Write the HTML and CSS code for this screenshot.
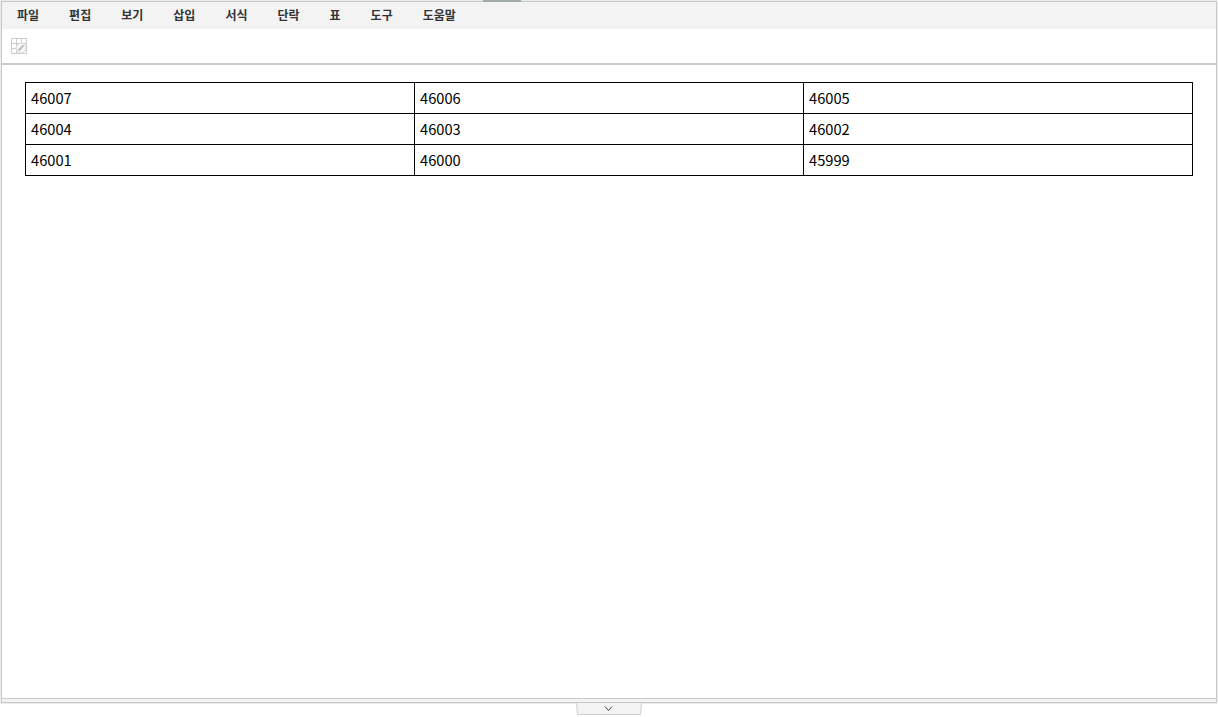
FILE: index.html
```html
<!DOCTYPE html>
<html lang="ko">

<head>
    <meta charset="UTF-8">
    <meta name="viewport" content="width=device-width, initial-scale=1.0">
    <title>Editor</title>
    <link rel="stylesheet" href="styles.css">
</head>

<body>
    <div class="frame">
        <div class="editor">
            <span class="top-tab"></span>
            <div class="menubar">
                <span class="menu-item">파일</span>
                <span class="menu-item">편집</span>
                <span class="menu-item">보기</span>
                <span class="menu-item">삽입</span>
                <span class="menu-item">서식</span>
                <span class="menu-item">단락</span>
                <span class="menu-item">표</span>
                <span class="menu-item">도구</span>
                <span class="menu-item">도움말</span>
            </div>
            <div class="toolbar">
                <svg class="tool-icon" width="16" height="16" viewBox="0 0 16 16" fill="none">
                    <path d="M.5 .5H15.5V15.5H.5ZM.5 5.5H15.5M.5 10.5H15.5M5.5 .5V15.5M10.5 .5V5.5" stroke="#cdcdcd" />
                    <circle cx="10" cy="10" r="5" fill="#f6f6f6" stroke="#d6d6d6" />
                    <path d="M7.5 12.5L12.5 7.5" stroke="#bdbdbd" stroke-width="2" />
                </svg>
            </div>
            <div class="content">
                <table class="grid">
                    <tr>
                        <td>46007</td>
                        <td>46006</td>
                        <td>46005</td>
                    </tr>
                    <tr>
                        <td>46004</td>
                        <td>46003</td>
                        <td>46002</td>
                    </tr>
                    <tr>
                        <td>46001</td>
                        <td>46000</td>
                        <td>45999</td>
                    </tr>
                </table>
            </div>
            <div class="statusbar"></div>
        </div>
    </div>
    <div class="footer">
        <svg class="collapse-btn" width="66" height="12" viewBox="0 0 66 12" fill="none">
            <path d="M.5 0L1.5 11.5H64.5L65.5 0Z" fill="#f3f3f3" />
            <path d="M.5 0L1.5 11.5H64.5L65.5 0" stroke="#cfcfcf" />
            <path d="M29 3.5L32.5 7.5L36 3.5" stroke="#444" />
        </svg>
    </div>
</body>

</html>
```

FILE: styles.css
```css
html,
body {
    margin: 0;
    padding: 0;
    height: 100%;
    background-color: #fff;
    overflow: hidden;
}

body {
    display: flex;
    flex-direction: column;
    font-family: "Noto Sans CJK KR", "Noto Sans", sans-serif;
    color: #000;
}

.frame {
    height: 704px;
    box-sizing: border-box;
    display: flex;
    border: 1px solid #ececec;
}

.editor {
    position: relative;
    flex: 1;
    display: flex;
    flex-direction: column;
    border: 1px solid #c8c8c8;
}

.top-tab {
    position: absolute;
    top: -2px;
    left: 481px;
    width: 38px;
    height: 2px;
    background-color: #a0ada8;
}

.menubar {
    height: 27px;
    display: flex;
    gap: 30px;
    padding-left: 15px;
    background-color: #f3f3f3;
}

.menu-item {
    font-size: 12px;
    font-weight: 700;
    line-height: 25px;
    color: #333;
}

.toolbar {
    height: 34px;
    display: flex;
    align-items: center;
    padding-left: 9px;
    border-bottom: 2px solid #ccc;
}

.tool-icon {
    display: block;
    margin-top: -1px;
}

.content {
    flex: 1;
    padding: 17px 23px 0;
}

.grid {
    width: 1168px;
    border-collapse: collapse;
    table-layout: fixed;
    font-size: 14.67px;
}

.grid td {
    height: 31px;
    padding: 0 5px 2px;
    box-sizing: border-box;
    border: 1px solid #000;
}

.statusbar {
    height: 3px;
    border-top: 1px solid #c8c8c8;
    background-color: #f3f3f3;
}

.footer {
    display: flex;
    justify-content: center;
    margin-top: -1px;
}

.collapse-btn {
    display: block;
}
```
